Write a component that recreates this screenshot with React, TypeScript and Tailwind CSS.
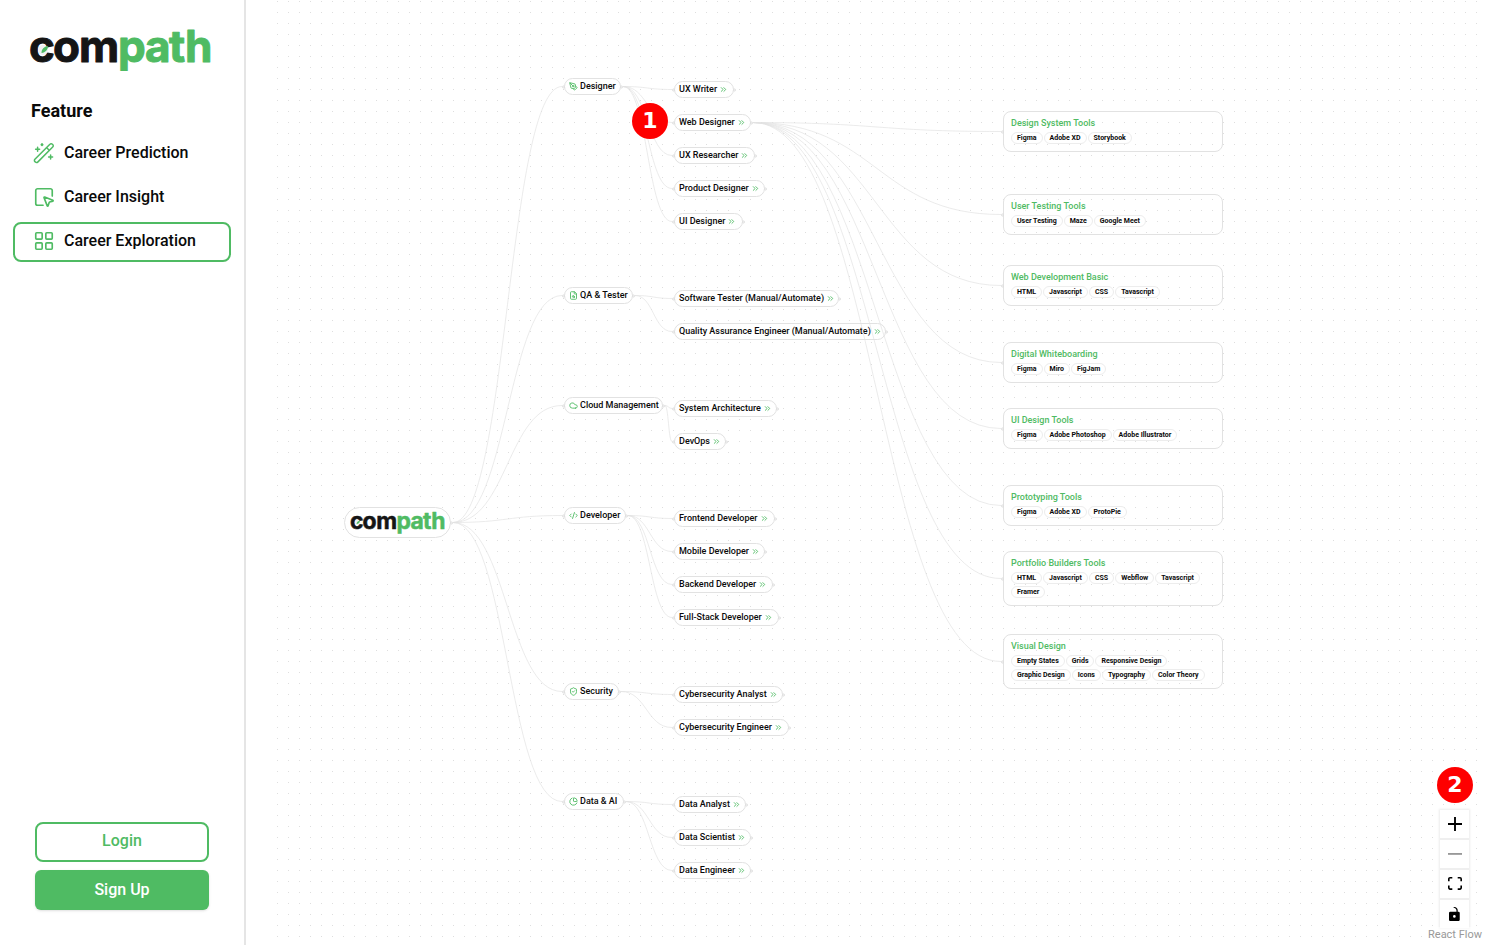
import React from "react";
import {
  ChartPie,
  ChevronsRight,
  Cloud,
  CodeXml,
  FileSearch,
  LayoutGrid,
  PenTool,
  ShieldCheck,
  SquareMousePointer,
  type LucideIcon,
} from "lucide-react";

type Career = { label: string; width: number; y: number };
type Field = { label: string; icon: LucideIcon; width: number; y: number; careers: Career[] };
type Skill = { title: string; y: number; height: number; tags: string[] };

const ROOT = { x: 72, y: 522, width: 107 };
const FIELD_X = 292;
const CAREER_X = 402;
const SKILL_X = 732;

const fields: Field[] = [
  {
    label: "Designer", icon: PenTool, width: 57, y: 87,
    careers: [
      { label: "UX Writer", width: 60, y: 90 },
      { label: "Web Designer", width: 77, y: 123 },
      { label: "UX Researcher", width: 81, y: 156 },
      { label: "Product Designer", width: 91, y: 189 },
      { label: "UI Designer", width: 69, y: 222 },
    ],
  },
  {
    label: "QA & Tester", icon: FileSearch, width: 69, y: 296,
    careers: [
      { label: "Software Tester (Manual/Automate)", width: 165, y: 299 },
      { label: "Quality Assurance Engineer (Manual/Automate)", width: 212, y: 332 },
    ],
  },
  {
    label: "Cloud Management", icon: Cloud, width: 99, y: 406,
    careers: [
      { label: "System Architecture", width: 103, y: 409 },
      { label: "DevOps", width: 52, y: 442 },
    ],
  },
  {
    label: "Developer", icon: CodeXml, width: 62, y: 516,
    careers: [
      { label: "Frontend Developer", width: 101, y: 519 },
      { label: "Mobile Developer", width: 91, y: 552 },
      { label: "Backend Developer", width: 99, y: 585 },
      { label: "Full-Stack Developer", width: 105, y: 618 },
    ],
  },
  {
    label: "Security", icon: ShieldCheck, width: 55, y: 692,
    careers: [
      { label: "Cybersecurity Analyst", width: 109, y: 695 },
      { label: "Cybersecurity Engineer", width: 115, y: 728 },
    ],
  },
  {
    label: "Data & AI", icon: ChartPie, width: 60, y: 802,
    careers: [
      { label: "Data Analyst", width: 72, y: 805 },
      { label: "Data Scientist", width: 77, y: 838 },
      { label: "Data Engineer", width: 77, y: 871 },
    ],
  },
];

const skills: Skill[] = [
  { title: "Design System Tools", y: 111, height: 41, tags: ["Figma", "Adobe XD", "Storybook"] },
  { title: "User Testing Tools", y: 194, height: 41, tags: ["User Testing", "Maze", "Google Meet"] },
  { title: "Web Development Basic", y: 265, height: 41, tags: ["HTML", "Javascript", "CSS", "Tavascript"] },
  { title: "Digital Whiteboarding", y: 342, height: 41, tags: ["Figma", "Miro", "FigJam"] },
  { title: "UI Design Tools", y: 408, height: 41, tags: ["Figma", "Adobe Photoshop", "Adobe Illustrator"] },
  { title: "Prototyping Tools", y: 485, height: 41, tags: ["Figma", "Adobe XD", "ProtoPie"] },
  { title: "Portfolio Builders Tools", y: 551, height: 55, tags: ["HTML", "Javascript", "CSS", "Webflow", "Tavascript", "Framer"] },
  { title: "Visual Design", y: 634, height: 55, tags: ["Empty States", "Grids", "Responsive Design", "Graphic Design", "Icons", "Typography", "Color Theory"] },
];

function bezier(x1: number, y1: number, x2: number, y2: number) {
  const mid = (x1 + x2) / 2;
  return `M${x1} ${y1} C${mid} ${y1} ${mid} ${y2} ${x2} ${y2}`;
}

function Logo({ className }: { className: string }) {
  return (
    <svg viewBox="0 0 180 48" className={`overflow-visible ${className}`} role="img" aria-label="compath">
      <g className="font-['Inter'] text-[44px] font-bold" strokeWidth="1" strokeLinejoin="round">
        <g fill="#151515" stroke="#151515">
          <text x="-2" y="36">c</text>
          <text x="22" y="36">o</text>
          <text x="48" y="36">m</text>
        </g>
        <g fill="#4fbb63" stroke="#4fbb63">
          <text x="87" y="36">p</text>
          <text x="114" y="36">a</text>
          <text x="138" y="36">t</text>
          <text x="154" y="36">h</text>
        </g>
      </g>
      <circle cx="12" cy="24" r="5" fill="#f1f1f1" />
      <path d="M10.500 27 C10.500 23 13 20.500 17 20 C16.800 24 14.500 26.500 10.500 27Z" fill="#4fbb63" />
    </svg>
  );
}

function WandIcon() {
  return (
    <svg viewBox="0 0 20 20" className="size-5 overflow-visible" fill="none" stroke="currentColor" strokeWidth="1.500" strokeLinecap="round" strokeLinejoin="round" aria-hidden="true">
      <path d="M.9 16.300 15.900 1.200a1.700 1.700 0 0 1 2.500 0l.3.300a1.700 1.700 0 0 1 0 2.500L3.700 19.100a1.600 1.600 0 0 1-2.300 0l-.5-.5a1.600 1.600 0 0 1 0-2.300Z" />
      <path d="m12.700 4.800 2.500 2.500" />
      <path d="M3.600 4.200v4M1.600 6.200h4M16.600 12v4M14.600 14h4" />
      <path d="m8 .9.8.8-.8.8-.8-.8Z" />
    </svg>
  );
}

function NavLink({ label, icon, active = false }: { label: string; icon: React.ReactNode; active?: boolean }) {
  return (
    <a
      href="#"
      aria-current={active ? "page" : undefined}
      className={`flex h-10 items-center gap-2.5 rounded-lg border-2 px-[19px] pb-0.5 text-base font-medium ${active ? "border-[#4fbb63]" : "border-transparent"}`}
    >
      <span className="text-[#4fbb63]">{icon}</span>
      <span>{label}</span>
    </a>
  );
}

function Sidebar() {
  return (
    <aside className="flex w-[246px] shrink-0 flex-col border-r-2 border-[#e5e5e5] px-[13px] pb-[35px] pt-[26px]">
      <Logo className="ml-[18px] h-12 w-[180px]" />
      <h2 className="ml-[18px] mt-[23px] text-lg font-bold">Feature</h2>
      <nav className="mt-[9px] flex flex-col gap-1">
        <NavLink label="Career Prediction" icon={<WandIcon />} />
        <NavLink label="Career Insight" icon={<SquareMousePointer className="-mx-px size-[22px]" strokeWidth={1.8} />} />
        <NavLink label="Career Exploration" icon={<LayoutGrid className="-mx-px size-[22px]" strokeWidth={1.8} />} active />
      </nav>
      <div className="mx-[22px] mt-auto flex flex-col gap-2">
        <button className="h-10 rounded-lg border-2 border-[#4fbb63] pb-0.5 text-base font-medium text-[#4fbb63]">Login</button>
        <button className="h-10 rounded-md bg-[#4fbb63] text-base font-medium text-white shadow-sm">Sign Up</button>
      </div>
    </aside>
  );
}

function Handle({ side }: { side: "left" | "right" }) {
  return (
    <span
      className={`absolute top-1/2 size-[3px] -translate-y-1/2 rounded-full border border-[#dcdcdc] bg-white ${side === "left" ? "-left-[3px]" : "-right-[3px]"}`}
    />
  );
}

const pillClass =
  "absolute flex h-[17px] items-center rounded-full border border-[#e2e2e2] bg-white px-1 text-[9px] leading-none font-medium whitespace-nowrap";

function FieldNode({ field }: { field: Field }) {
  const Icon = field.icon;
  return (
    <div className={`${pillClass} gap-0.5`} style={{ left: FIELD_X, top: field.y - 9, width: field.width }}>
      <Icon className="size-[9px] shrink-0 text-[#4fbb63]" strokeWidth={2.4} />
      <span>{field.label}</span>
      <Handle side="left" />
      <Handle side="right" />
    </div>
  );
}

function CareerNode({ career }: { career: Career }) {
  return (
    <button className={`${pillClass} gap-0.5`} style={{ left: CAREER_X, top: career.y - 9, width: career.width }}>
      <span>{career.label}</span>
      <ChevronsRight className="size-[9px] shrink-0 text-[#4fbb63]" strokeWidth={2.4} />
      <Handle side="left" />
      <Handle side="right" />
    </button>
  );
}

function SkillNode({ skill }: { skill: Skill }) {
  return (
    <section
      className="absolute flex w-[220px] flex-col gap-[3px] rounded-lg border border-[#e2e2e2] p-1.5"
      style={{ left: SKILL_X - 1, top: skill.y, minHeight: skill.height }}
    >
      <h3 className="ml-px text-[9px] leading-[11px] font-medium text-[#4fbb63]">{skill.title}</h3>
      <ul className="ml-px flex flex-wrap gap-x-px gap-y-0.5">
        {skill.tags.map((tag) => (
          <li key={tag} className="flex h-3 items-center rounded-full border border-[#ededed] bg-white px-[5px] text-[7px] leading-none font-bold whitespace-nowrap">
            {tag}
          </li>
        ))}
      </ul>
      <Handle side="left" />
    </section>
  );
}

function Edges() {
  const webDesigner = fields[0].careers[1];
  return (
    <svg className="absolute inset-0 h-full w-full" aria-hidden="true">
      <g fill="none" stroke="#e2e2e2" strokeWidth="0.700">
        {fields.map((f) => (
          <g key={f.label}>
            <path d={bezier(ROOT.x + ROOT.width + 2, ROOT.y + 0.5, FIELD_X - 2, f.y - 0.5)} />
            {f.careers.map((c) => (
              <path key={c.label} d={bezier(FIELD_X + f.width + 2, f.y - 0.5, CAREER_X - 2, c.y - 0.5)} />
            ))}
          </g>
        ))}
        {skills.map((s) => (
          <path key={s.title} d={bezier(CAREER_X + webDesigner.width + 2, webDesigner.y - 0.5, SKILL_X - 3, s.y + s.height / 2)} />
        ))}
      </g>
    </svg>
  );
}

function DotGrid() {
  return (
    <svg className="absolute inset-0 h-full w-full" aria-hidden="true">
      <defs>
        <pattern id="dots" width="11" height="11" patternUnits="userSpaceOnUse">
          <circle cx="5.500" cy="1.500" r="0.550" fill="#d8d8d8" />
        </pattern>
      </defs>
      <rect width="100%" height="100%" fill="url(#dots)" />
    </svg>
  );
}

function Marker({ value, className }: { value: number; className: string }) {
  return (
    <span className={`absolute flex size-9 items-center justify-center rounded-full bg-[#fe0000] font-['DejaVu_Sans'] text-[22px] leading-none font-bold text-white ${className}`}>
      {value}
    </span>
  );
}

const controls = [
  { label: "zoom in", box: "0 0 32 32", size: "w-3.5", d: "M32 18.133H18.133V32h-4.266V18.133H0v-4.266h13.867V0h4.266v13.867H32z" },
  { label: "zoom out", box: "0 0 32 5", size: "w-3.5 opacity-40", d: "M0 0h32v4.200H0z" },
  {
    label: "fit view", box: "0 0 32 30", size: "w-3.5",
    d: "M3.692 4.63c0-.53.4-.938.939-.938h5.215V0H4.708C2.13 0 0 2.054 0 4.63v5.216h3.692V4.631zM27.354 0h-5.2v3.692h5.17c.53 0 .984.4.984.939v5.215H32V4.631A4.624 4.624 0 0027.354 0zm.954 24.83c0 .532-.4.94-.939.94h-5.215v3.768h5.215c2.577 0 4.631-2.13 4.631-4.707v-5.139h-3.692v5.139zm-23.677.94c-.531 0-.939-.4-.939-.94v-5.138H0v5.139c0 2.577 2.13 4.707 4.708 4.707h5.138V25.77H4.631z",
  },
  {
    label: "toggle interactivity", box: "0 0 25 32", size: "w-[11px]",
    d: "M21.333 10.667H19.81V7.619C19.81 3.429 16.38 0 12.19 0c-4.114 1.828-1.37 2.133.305 2.438 1.676.305 4.42 2.59 4.42 5.181v3.048H3.047A3.056 3.056 0 000 13.714v15.238A3.056 3.056 0 003.048 32h18.285a3.056 3.056 0 003.048-3.048V13.714a3.056 3.056 0 00-3.048-3.047zM12.19 24.533a3.056 3.056 0 01-3.047-3.047 3.056 3.056 0 013.047-3.048 3.056 3.056 0 013.048 3.048 3.056 3.056 0 01-3.048 3.047z",
  },
];

function Controls() {
  return (
    <div className="absolute right-4 bottom-[15px] flex flex-col divide-y-2 divide-[#efefef] bg-white shadow-[0_0_2px_1px_rgba(0,0,0,0.08)]">
      {controls.map((c) => (
        <button key={c.label} aria-label={c.label} className="box-content flex h-7 w-[29px] items-center justify-center">
          <svg viewBox={c.box} className={c.size} aria-hidden="true">
            <path d={c.d} />
          </svg>
        </button>
      ))}
    </div>
  );
}

export default function App() {
  return (
    <div className="flex min-h-screen bg-white font-['Roboto',sans-serif] text-[#0a0a0a]">
      <Sidebar />
      <main className="flex min-w-0 flex-1 pr-[27px] pb-0.5 pl-[26px]">
        <div className="relative min-h-[900px] flex-1">
          <DotGrid />
          <div className="absolute flex h-[31px] items-center justify-center rounded-full border border-[#e2e2e2] bg-white" style={{ left: ROOT.x, top: ROOT.y - 15, width: ROOT.width }}>
            <Logo className="h-[25px] w-24" />
            <Handle side="right" />
          </div>
          {fields.map((f) => (
            <React.Fragment key={f.label}>
              <FieldNode field={f} />
              {f.careers.map((c) => (
                <CareerNode key={c.label} career={c} />
              ))}
            </React.Fragment>
          ))}
          {skills.map((s) => (
            <SkillNode key={s.title} skill={s} />
          ))}
          <div className="pointer-events-none absolute inset-0">
            <Edges />
          </div>
          <Marker value={1} className="top-[103px] left-[360px]" />
          <Marker value={2} className="right-3 bottom-[140px]" />
          <Controls />
          <a href="https://reactflow.dev" className="absolute right-0 bottom-0 bg-white/60 px-[3px] text-[11px] leading-4 text-[#999]">
            React Flow
          </a>
        </div>
      </main>
    </div>
  );
}
